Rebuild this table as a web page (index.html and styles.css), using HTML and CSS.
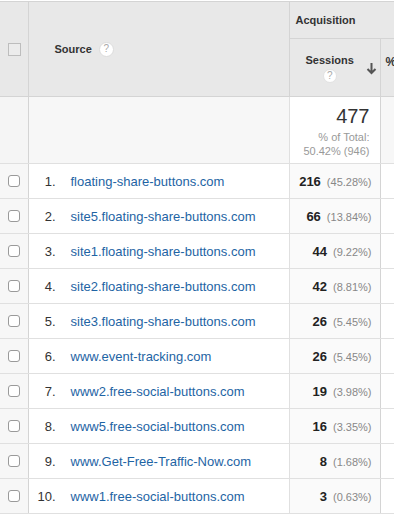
FILE: index.html
```html
<!DOCTYPE html>
<html>
<head>
<meta charset="utf-8">
<link rel="stylesheet" href="styles.css">
</head>
<body>
<table class="report">
  <colgroup>
    <col class="c-check">
    <col class="c-source">
    <col class="c-sessions">
    <col class="c-pct">
  </colgroup>
  <thead>
    <tr class="h-group">
      <th class="hcheck" rowspan="2"><span class="box-h"></span></th>
      <th class="hsource" rowspan="2"><span class="hs-wrap">Source <span class="help">?</span></span></th>
      <th class="hgroup" colspan="2">Acquisition</th>
    </tr>
    <tr class="h-metrics">
      <th class="hsessions">
        <div class="hm-inner">
          <div class="hm-label">Sessions<span class="help help-sm">?</span></div>
          <svg class="arrow" width="11" height="13" viewBox="0 0 11 13"><path d="M5.5 1v10M1.5 7l4 4 4-4" fill="none" stroke="#555" stroke-width="2"/></svg>
        </div>
      </th>
      <th class="hpct">%</th>
    </tr>
  </thead>
  <tbody>
    <tr class="totals">
      <td class="tcheck"></td>
      <td class="tsource"></td>
      <td class="tsessions">
        <div class="big">477</div>
        <div class="sub">% of Total:<br>50.42% (946)</div>
      </td>
      <td class="tpct"></td>
    </tr>
    <tr><td class="dcheck"><span class="box"></span></td><td class="dsrc"><span class="idx">1.</span><a>floating-share-buttons.com</a></td><td class="dval"><b>216</b><span class="pc">(45.28%)</span></td><td class="dpct"></td></tr>
    <tr><td class="dcheck"><span class="box"></span></td><td class="dsrc"><span class="idx">2.</span><a>site5.floating-share-buttons.com</a></td><td class="dval"><b>66</b><span class="pc">(13.84%)</span></td><td class="dpct"></td></tr>
    <tr><td class="dcheck"><span class="box"></span></td><td class="dsrc"><span class="idx">3.</span><a>site1.floating-share-buttons.com</a></td><td class="dval"><b>44</b><span class="pc">(9.22%)</span></td><td class="dpct"></td></tr>
    <tr><td class="dcheck"><span class="box"></span></td><td class="dsrc"><span class="idx">4.</span><a>site2.floating-share-buttons.com</a></td><td class="dval"><b>42</b><span class="pc">(8.81%)</span></td><td class="dpct"></td></tr>
    <tr><td class="dcheck"><span class="box"></span></td><td class="dsrc"><span class="idx">5.</span><a>site3.floating-share-buttons.com</a></td><td class="dval"><b>26</b><span class="pc">(5.45%)</span></td><td class="dpct"></td></tr>
    <tr><td class="dcheck"><span class="box"></span></td><td class="dsrc"><span class="idx">6.</span><a>www.event-tracking.com</a></td><td class="dval"><b>26</b><span class="pc">(5.45%)</span></td><td class="dpct"></td></tr>
    <tr><td class="dcheck"><span class="box"></span></td><td class="dsrc"><span class="idx">7.</span><a>www2.free-social-buttons.com</a></td><td class="dval"><b>19</b><span class="pc">(3.98%)</span></td><td class="dpct"></td></tr>
    <tr><td class="dcheck"><span class="box"></span></td><td class="dsrc"><span class="idx">8.</span><a>www5.free-social-buttons.com</a></td><td class="dval"><b>16</b><span class="pc">(3.35%)</span></td><td class="dpct"></td></tr>
    <tr><td class="dcheck"><span class="box"></span></td><td class="dsrc"><span class="idx">9.</span><a>www.Get-Free-Traffic-Now.com</a></td><td class="dval"><b>8</b><span class="pc">(1.68%)</span></td><td class="dpct"></td></tr>
    <tr><td class="dcheck"><span class="box"></span></td><td class="dsrc"><span class="idx">10.</span><a>www1.free-social-buttons.com</a></td><td class="dval"><b>3</b><span class="pc">(0.63%)</span></td><td class="dpct"></td></tr>
  </tbody>
</table>
</body>
</html>
```
FILE: styles.css
```css
html, body {
  margin: 0;
  padding: 0;
  background: #fff;
  overflow: hidden;
  width: 394px;
  height: 526px;
}
body {
  font-family: "Liberation Sans", Arial, sans-serif;
  color: #333;
}
.report {
  margin-top: 1px;
  border-collapse: collapse;
  table-layout: fixed;
  width: 460px;
}
.c-check { width: 28px; }
.c-source { width: 261px; }
.c-sessions { width: 91px; }
.c-pct { width: 80px; }

.report th, .report td {
  border: 1px solid #d4d4d4;
  padding: 0;
}
.report th:first-child, .report td:first-child { border-left: 0; }

thead th {
  background: #e8e8e8;
  font-size: 11px;
  font-weight: bold;
  color: #333;
  text-align: left;
}
.h-group { height: 37px; }
.h-metrics { height: 58px; }
.hcheck { text-align: center; vertical-align: middle; }
.box-h {
  display: block;
  width: 11px;
  height: 11px;
  margin: 0 0 0 8px;
  border: 1px solid #bdbdbd;
  background: #ececec;
}
.hsource { vertical-align: middle; padding-left: 26px !important; }
.hs-wrap { display: inline-flex; align-items: center; gap: 7px; }
.help {
  display: inline-flex;
  align-items: center;
  justify-content: center;
  width: 13px;
  height: 13px;
  border-radius: 50%;
  background: #fff;
  border: 1px solid #dcdcdc;
  color: #aaa;
  font-size: 10px;
  font-weight: normal;
  line-height: 1;
}
.hgroup { padding-left: 6px !important; vertical-align: middle; }
.hsessions { vertical-align: middle; }
.hm-inner {
  display: flex;
  align-items: center;
  padding-left: 16px;
  padding-right: 3px;
}
.hm-label {
  display: flex;
  flex-direction: column;
  align-items: center;
  gap: 3px;
  margin-top: 2px;
}
.help-sm { width: 12px; height: 12px; border-color: #e2e2e2; }
.arrow { margin-left: auto; margin-top: 2px; }
.hpct { vertical-align: top; padding: 16px 0 0 5px !important; font-size: 12px; }

.totals { height: 67px; }
.tcheck { background: #f5f5f5; }
.tsource { background: #f7f7f7; }
.tsessions {
  background: #fff;
  text-align: right;
  vertical-align: top;
  padding: 8px 10px 0 0 !important;
}
.tpct { background: #f7f7f7; }
.big { font-size: 20px; color: #333; line-height: 22px; }
.sub { font-size: 11px; color: #999; line-height: 14px; margin-top: 3px; }

tbody tr:not(.totals) { height: 35px; }
.report tbody td { border-color: #e0e0e0; }
.report tbody td.dcheck, .report tbody td.tcheck { border-right-color: #d4d4d4; }
.report tbody td.dval, .report tbody td.tsessions { border-left-color: #d4d4d4; border-right-color: #d4d4d4; }
.dcheck { background: #f7f7f7; vertical-align: middle; }
.box {
  display: block;
  width: 10px;
  height: 10px;
  margin-left: 8px;
  border: 1px solid #9a9a9a;
  border-radius: 3px;
  background: #fff;
}
.dsrc { font-size: 13px; vertical-align: middle; white-space: nowrap; }
.idx {
  display: inline-block;
  width: 27px;
  text-align: right;
  color: #333;
  margin-right: 15px;
}
.dsrc a { color: #1e64a4; text-decoration: none; }
.dval {
  background: #fafafa;
  text-align: right;
  vertical-align: middle;
  padding-right: 8px !important;
  white-space: nowrap;
}
.dval b { font-size: 13px; color: #222; }
.pc { font-size: 11px; color: #888; margin-left: 6px; }
.dpct { background: #fff; }
```
